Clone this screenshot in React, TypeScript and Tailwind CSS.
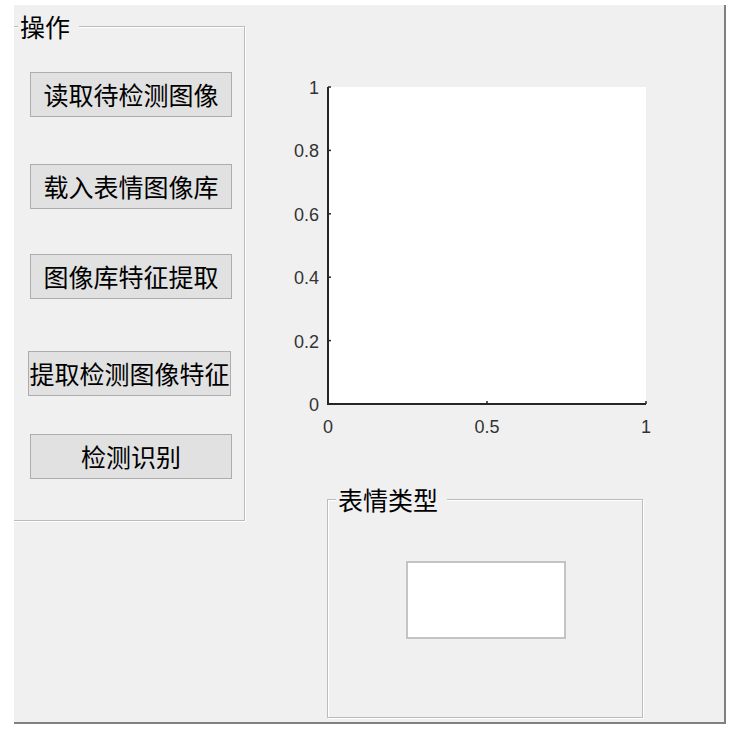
const cjk = { fontFamily: '"Noto Sans CJK SC", "Noto Sans", sans-serif' };

function Panel({
  title,
  className,
  children,
}: {
  title: string;
  className: string;
  children?: React.ReactNode;
}) {
  return (
    <div
      className={`relative shrink-0 border border-[#bcbcbc] shadow-[inset_1px_1px_0_#ffffff,1px_1px_0_#ffffff] ${className}`}
    >
      <span
        className="absolute top-[-15px] bg-[#f0f0f0] pl-[2px] pr-[9px] text-[25px] leading-[28px] text-black"
        style={cjk}
      >
        {title}
      </span>
      {children}
    </div>
  );
}

function PushButton({ label, className }: { label: string; className: string }) {
  return (
    <button
      type="button"
      className={`flex h-[45px] items-center justify-center whitespace-nowrap border border-[#adadad] bg-[#e1e1e1] text-[25px] leading-none text-black ${className}`}
      style={cjk}
    >
      {label}
    </button>
  );
}

function Axes() {
  const left = 48;
  const right = 366;
  const top = 17;
  const bottom = 334;
  const yTicks = [0, 0.2, 0.4, 0.6, 0.8, 1];
  const xTicks = [0, 0.5, 1];
  const yOf = (v: number) => bottom - v * (bottom - top);
  const xOf = (v: number) => left + v * (right - left);

  return (
    <svg width="380" height="380" className="shrink-0" style={{ fontFamily: '"Liberation Sans", Arial, sans-serif' }}>
      <rect x={left} y={top} width={right - left} height={bottom - top} fill="#ffffff" />
      <path d={`M${left} ${top} V${bottom} H${right}`} fill="none" stroke="#262626" strokeWidth="2" />
      {yTicks.map((v) => (
        <g key={v}>
          <line x1={left} x2={left + 3} y1={yOf(v)} y2={yOf(v)} stroke="#262626" strokeWidth="1.5" />
          <text x={39} y={yOf(v) + 7} textAnchor="end" fontSize="18" fill="#333333">
            {v}
          </text>
        </g>
      ))}
      {xTicks.map((v) => (
        <g key={v}>
          <line x1={xOf(v)} x2={xOf(v)} y1={bottom} y2={bottom - 3} stroke="#262626" strokeWidth="1.5" />
          <text x={xOf(v)} y={363} textAnchor="middle" fontSize="18" fill="#333333">
            {v}
          </text>
        </g>
      ))}
    </svg>
  );
}

export default function App() {
  return (
    <div className="min-h-screen bg-white pl-[14px] pt-[5px]">
      <div className="flex h-[719px] w-[712px] overflow-hidden border-b-2 border-r-2 border-[#808080] bg-[#f0f0f0]">
        {/* 操作 */}
        <Panel title="操作" className="-ml-[4px] mt-[21px] h-[495px] w-[235px] [&>span]:left-[7px]">
          <div className="flex flex-col pl-[19px] pt-[45px]">
            <PushButton label="读取待检测图像" className="w-[202px]" />
            <PushButton label="载入表情图像库" className="mt-[47px] w-[202px]" />
            <PushButton label="图像库特征提取" className="mt-[45px] w-[202px]" />
            <PushButton label="提取检测图像特征" className="-ml-[2px] mt-[52px] w-[203px]" />
            <PushButton label="检测识别" className="mt-[38px] w-[202px]" />
          </div>
        </Panel>

        <div className="ml-[35px] mt-[65px] flex flex-col">
          <Axes />
          {/* 表情类型 */}
          <Panel title="表情类型" className="ml-[47px] mt-[49px] h-[219px] w-[316px] [&>span]:left-[8px]">
            <div className="pl-[78px] pt-[61px]">
              <div className="h-[78px] w-[160px] border-2 border-[#c4c4c4] bg-white" />
            </div>
          </Panel>
        </div>
      </div>
    </div>
  );
}
